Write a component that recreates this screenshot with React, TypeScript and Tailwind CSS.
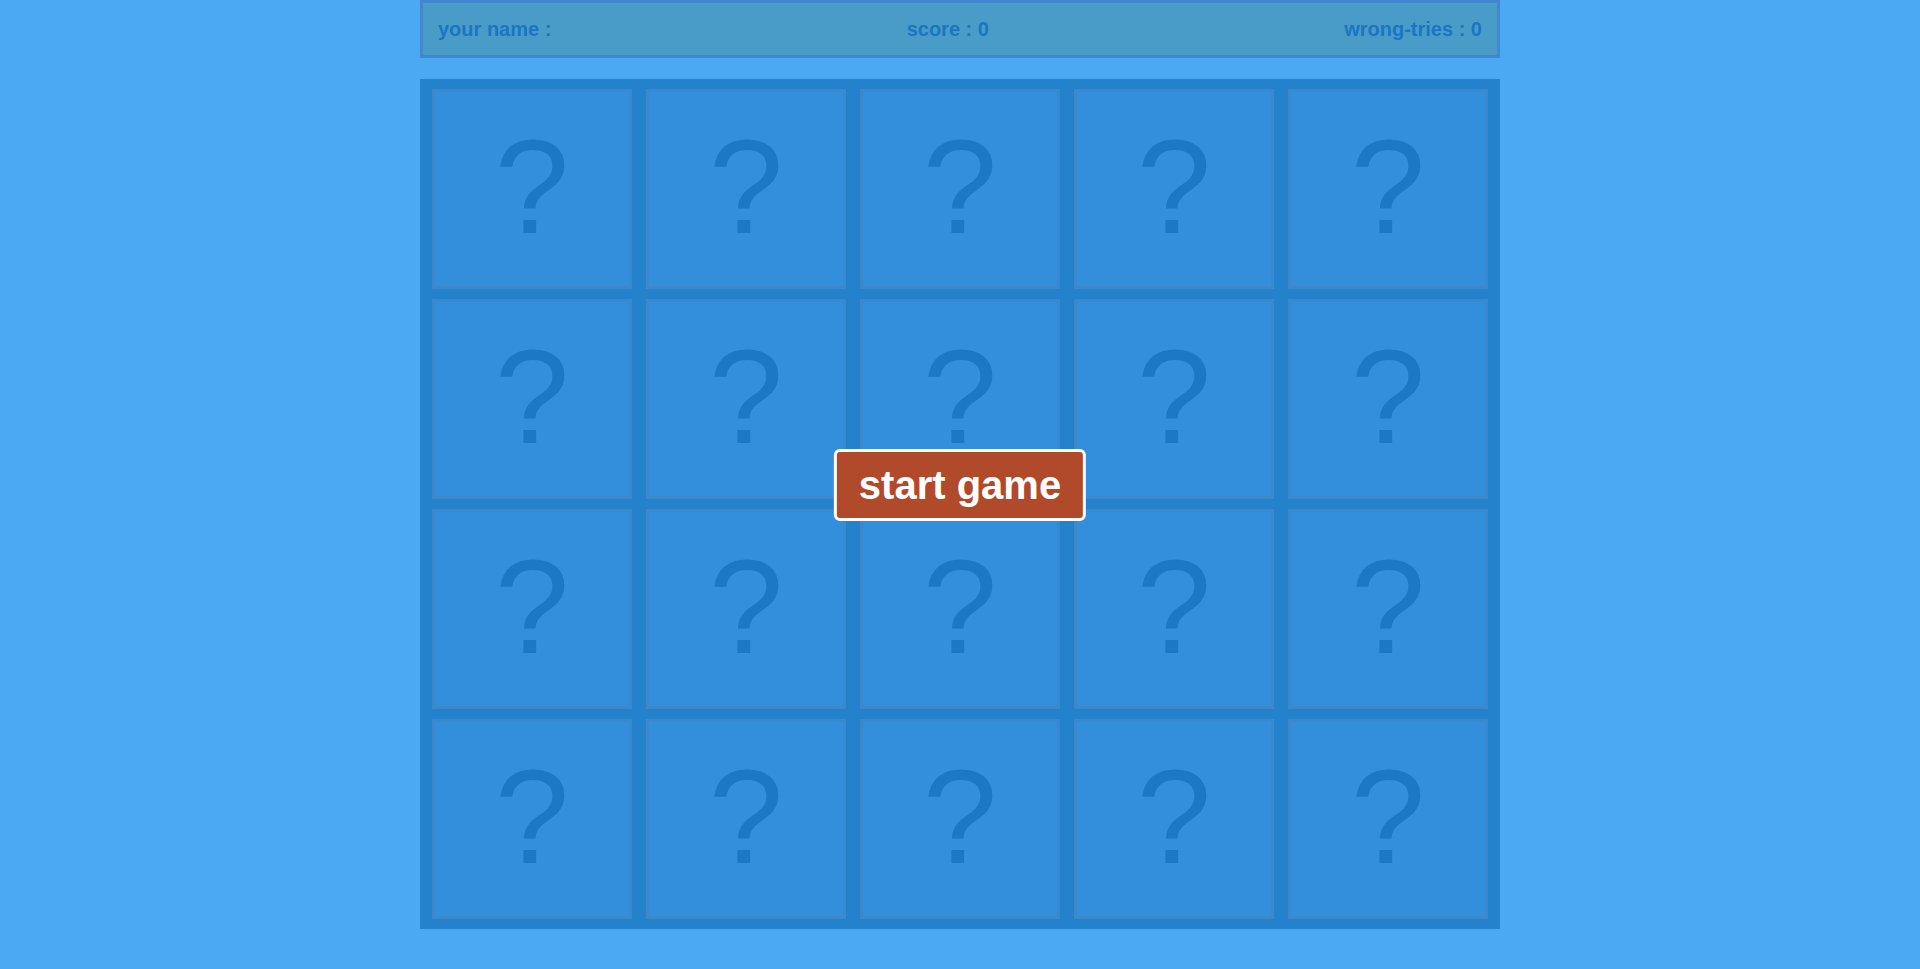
export default function App() {
  const cards = Array.from({ length: 20 }, (_, i) => i);

  return (
    <main
      className="relative min-h-screen bg-[#4ba9f4]"
      style={{ fontFamily: '"Liberation Sans", Arial, sans-serif' }}
    >
      <div className="mx-auto w-[1080px]">
        <div className="flex h-[58px] items-center justify-between border-[3px] border-[#3f88cb] bg-[#4a9cc8] px-[15px] text-[20px] font-bold text-[#1b75c3]">
          <span>your name :</span>
          <span>score : 0</span>
          <span>wrong-tries : 0</span>
        </div>

        <div className="mt-[21px] grid grid-cols-5 gap-x-[14px] gap-y-[10px] bg-[#2481cb] px-[12px] py-[10px]">
          {cards.map((i) => (
            <div
              key={i}
              className="flex h-[200px] items-center justify-center border-[3px] border-[#3b89cc] bg-[#338fdb] pb-[4px] text-[134px] leading-none text-[#1c78c5]"
            >
              ?
            </div>
          ))}
        </div>
      </div>

      <button
        type="button"
        className="absolute left-1/2 top-[449px] -translate-x-1/2 rounded-[6px] border-[3px] border-white bg-[#b04a2a] px-[22px] py-[10px] text-[40px] font-bold leading-[46px] text-white"
      >
        start game
      </button>
    </main>
  );
}
